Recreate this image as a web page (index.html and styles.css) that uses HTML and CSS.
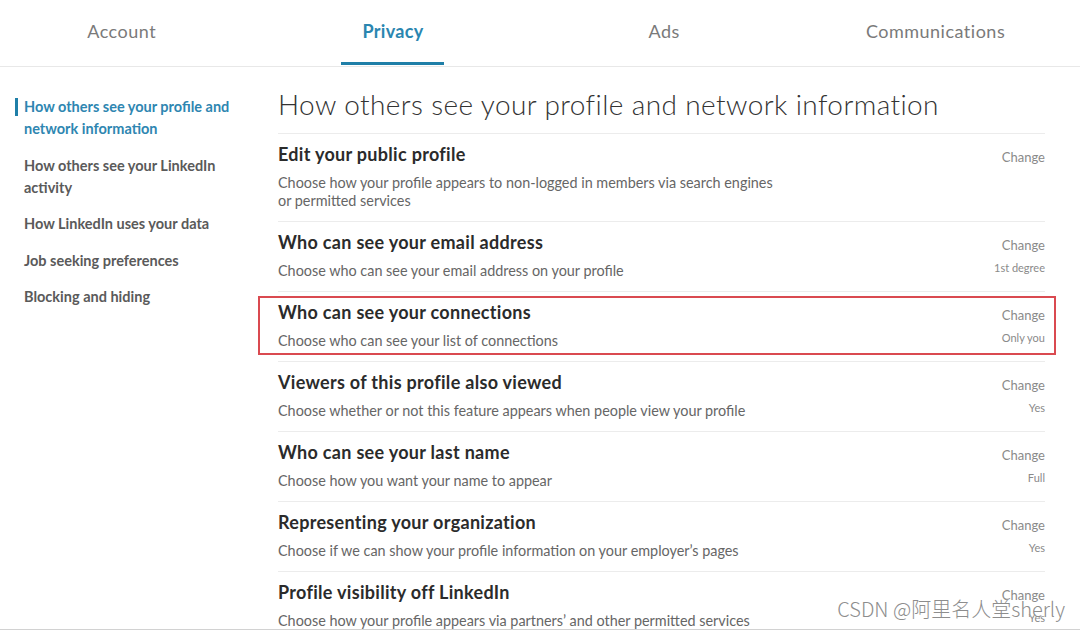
FILE: index.html
```html
<!DOCTYPE html>
<html lang="en">
<head>
<meta charset="utf-8">
<title>Privacy settings</title>
<link rel="stylesheet" href="styles.css">
</head>
<body>
<div class="frame">
  <nav class="tabs">
    <div class="tab"><a class="tab-link">Account</a></div>
    <div class="tab"><a class="tab-link active">Privacy</a></div>
    <div class="tab"><a class="tab-link">Ads</a></div>
    <div class="tab"><a class="tab-link">Communications</a></div>
  </nav>
  <div class="page">
    <aside class="sidebar">
      <a class="side-item active">How others see your profile and network information</a>
      <a class="side-item">How others see your LinkedIn activity</a>
      <a class="side-item">How LinkedIn uses your data</a>
      <a class="side-item">Job seeking preferences</a>
      <a class="side-item">Blocking and hiding</a>
    </aside>
    <main class="main">
      <h1 class="heading">How others see your profile and network information</h1>
      <div class="row">
        <div class="row-text">
          <div class="row-title">Edit your public profile</div>
          <div class="row-desc">Choose how your profile appears to non-logged in members via search engines or permitted services</div>
        </div>
        <div class="row-side"><div class="change">Change</div></div>
      </div>
      <div class="row">
        <div class="row-text">
          <div class="row-title">Who can see your email address</div>
          <div class="row-desc">Choose who can see your email address on your profile</div>
        </div>
        <div class="row-side"><div class="change">Change</div><div class="value">1st degree</div></div>
      </div>
      <div class="row">
        <div class="row-text">
          <div class="row-title">Who can see your connections</div>
          <div class="row-desc">Choose who can see your list of connections</div>
        </div>
        <div class="row-side"><div class="change">Change</div><div class="value">Only you</div></div>
        <div class="highlight"></div>
      </div>
      <div class="row">
        <div class="row-text">
          <div class="row-title">Viewers of this profile also viewed</div>
          <div class="row-desc">Choose whether or not this feature appears when people view your profile</div>
        </div>
        <div class="row-side"><div class="change">Change</div><div class="value">Yes</div></div>
      </div>
      <div class="row">
        <div class="row-text">
          <div class="row-title">Who can see your last name</div>
          <div class="row-desc">Choose how you want your name to appear</div>
        </div>
        <div class="row-side"><div class="change">Change</div><div class="value">Full</div></div>
      </div>
      <div class="row">
        <div class="row-text">
          <div class="row-title">Representing your organization</div>
          <div class="row-desc">Choose if we can show your profile information on your employer’s pages</div>
        </div>
        <div class="row-side"><div class="change">Change</div><div class="value">Yes</div></div>
      </div>
      <div class="row">
        <div class="row-text">
          <div class="row-title">Profile visibility off LinkedIn</div>
          <div class="row-desc">Choose how your profile appears via partners’ and other permitted services</div>
        </div>
        <div class="row-side"><div class="change">Change</div><div class="value">Yes</div></div>
      </div>
    </main>
  </div>
  <div class="watermark">CSDN @阿里名人堂sherly</div>
</div>
</body>
</html>
```
FILE: styles.css
```css
html, body {
  margin: 0;
  padding: 0;
  background: #fff;
}
body {
  font-family: "Lato", "Liberation Sans", sans-serif;
  color: #333;
}
.frame {
  position: relative;
  height: 629px;
  overflow: hidden;
  border-bottom: 1px solid #d2d2d2;
}
.tabs {
  display: flex;
  height: 66px;
  border-bottom: 1px solid #e8e8e8;
  margin-left: -14px;
}
.tab {
  flex: 0 0 271.3px;
  display: flex;
  justify-content: center;
}
.tab-link {
  display: flex;
  align-items: center;
  box-sizing: border-box;
  height: 66px;
  padding: 0 21px 2px;
  border-bottom: 3px solid transparent;
  font-size: 18px;
  color: #7a7a7a;
  letter-spacing: 0.5px;
}
.tab-link.active {
  color: #2a86b0;
  font-weight: 700;
  letter-spacing: 0.3px;
  border-bottom: 3px solid #1f7fa8;
  height: 65px;
  padding-bottom: 1px;
}
.page {
  display: flex;
}
.sidebar {
  flex: 0 0 263px;
  padding: 29px 0 0 15px;
  display: flex;
  flex-direction: column;
  gap: 14.5px;
}
.side-item {
  position: relative;
  display: block;
  padding-left: 9px;
  padding-right: 20px;
  font-size: 14.5px;
  line-height: 22px;
  font-weight: 700;
  color: #5a5a5a;
}
.side-item.active {
  color: #2e86b1;
}
.side-item.active::before {
  content: "";
  position: absolute;
  left: 0;
  top: 2px;
  width: 3px;
  height: 18px;
  background: #1f7fa8;
}
.main {
  flex: 0 0 767px;
}
.heading {
  margin: 19px 0 11px;
  font-size: 28px;
  line-height: 36px;
  font-weight: 300;
  color: #333;
  letter-spacing: 0.4px;
}
.row {
  position: relative;
  display: flex;
  justify-content: space-between;
  border-top: 1px solid #ececec;
  padding: 9px 0 11px;
}
.row-text {
  max-width: 500px;
}
.row-title {
  font-size: 18px;
  line-height: 22px;
  font-weight: 700;
  color: #2b2b2b;
  letter-spacing: 0.3px;
  margin-bottom: 9px;
}
.row-desc {
  font-size: 14.4px;
  line-height: 18px;
  color: #666;
}
.row-side {
  padding-top: 5px;
  text-align: right;
}
.change {
  font-size: 13px;
  line-height: 18px;
  color: #8a8a8a;
}
.value {
  margin-top: 6px;
  font-size: 11px;
  line-height: 16px;
  color: #8a8a8a;
}
.highlight {
  position: absolute;
  top: 4px;
  left: -20px;
  right: -11px;
  bottom: 6px;
  border: 2px solid #da4a50;
}
.watermark {
  position: absolute;
  right: 15px;
  bottom: 8px;
  font-family: "Noto Sans CJK SC", "Noto Sans", sans-serif;
  font-weight: 300;
  font-size: 20px;
  line-height: 24px;
  color: #8d8d8d;
  text-shadow: 0 0 2px #fff;
}
```
